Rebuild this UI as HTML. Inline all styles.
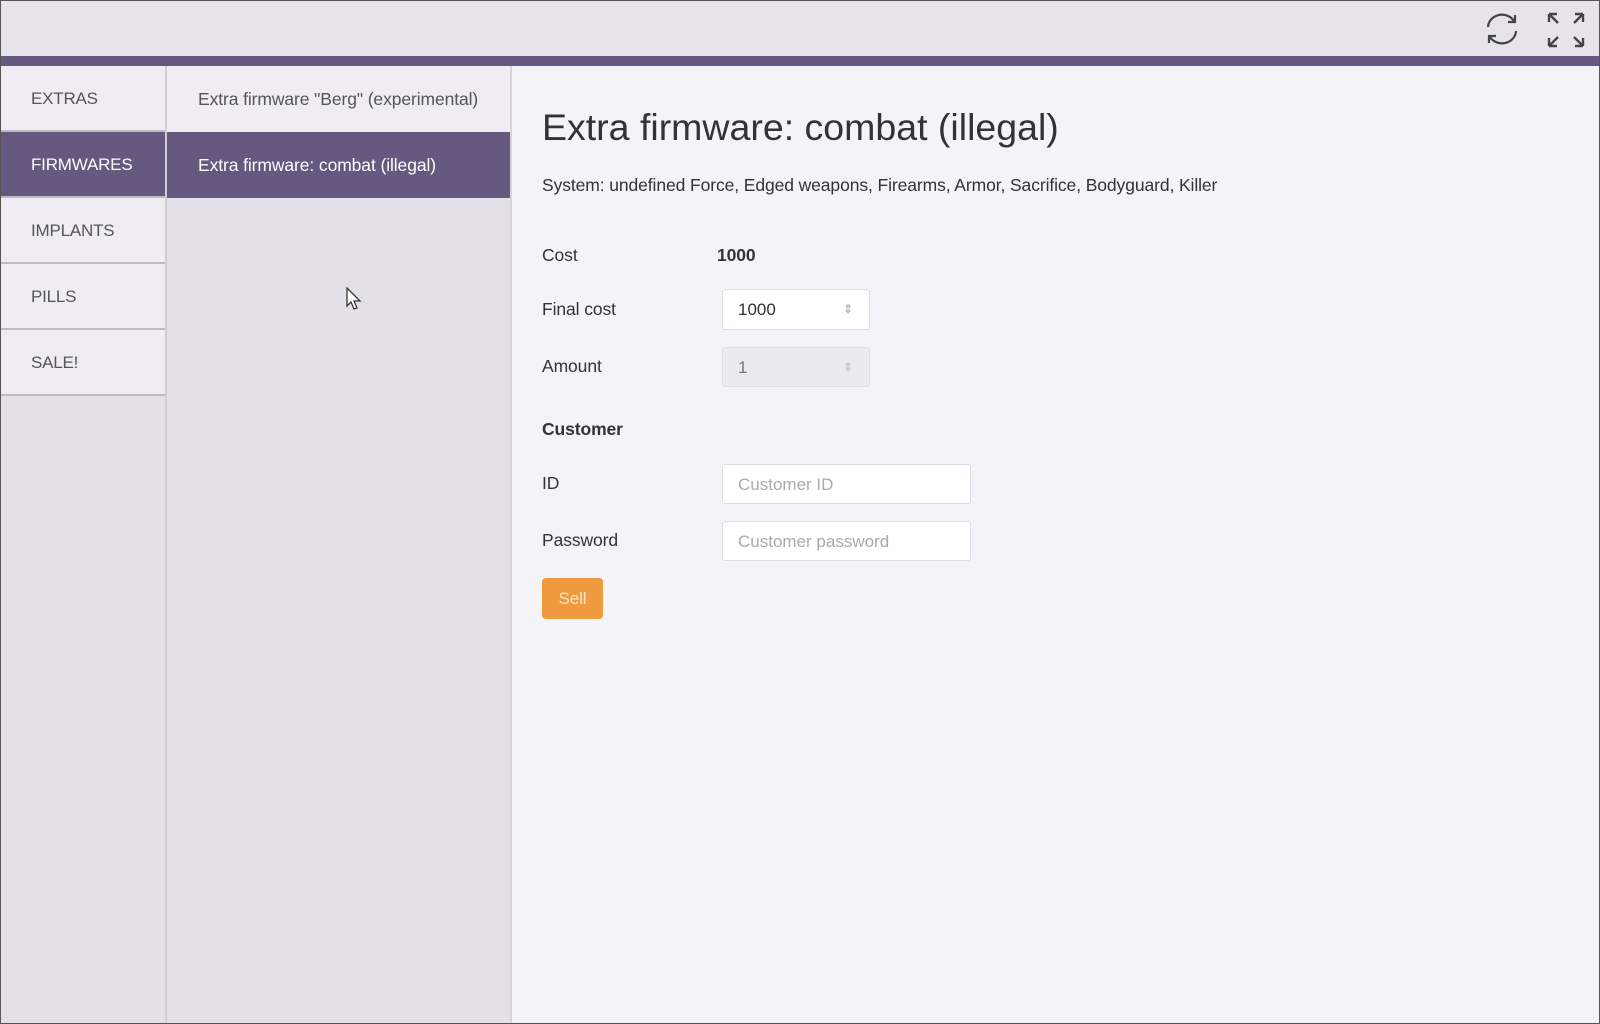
<!DOCTYPE html>
<html><head><style>
*{margin:0;padding:0;box-sizing:border-box}
body{width:1600px;height:1024px;overflow:hidden;font-family:"Liberation Sans",sans-serif;background:#f4f3f8;position:relative;color:#333}
.frame{position:absolute;inset:0;border:1px solid #555;pointer-events:none;z-index:9}
.top{position:absolute;left:0;top:0;width:1600px;height:56px;background:#e6e4ea}
.band{position:absolute;left:0;top:56px;width:1600px;height:10px;background:#66587f}
.c1{position:absolute;left:0;top:66px;width:167px;height:958px;background:#e3e1e7;border-right:2px solid #cfcdd3}
.c2{position:absolute;left:167px;top:66px;width:345px;height:958px;background:#e3e1e7;border-right:2px solid #d6d4da}
.mi{height:66px;line-height:66px;padding-left:31px;font-size:17px;letter-spacing:-0.2px;color:#555;background:#efedf3;border-bottom:2px solid #bdbbc2}
.c2 .mi{padding-left:31px;border-bottom:none;font-size:17.5px;letter-spacing:-0.1px}
.act{background:#66587f!important;color:#fff!important}
.t{position:absolute;white-space:nowrap;font-size:17.5px;letter-spacing:-0.1px}
.inp{position:absolute;background:#fff;border:1px solid #dedde2;border-radius:3px;font-size:17px;padding-left:15px;line-height:39px}
</style></head><body>
<div class="top"></div>
<svg style="position:absolute;left:1482px;top:10px" width="40" height="38" viewBox="0 0 40 38" fill="none" stroke="#444" stroke-width="2.2"><path d="M6 17a14 13 0 0 1 26-6"/><path d="M34 21a14 13 0 0 1-26 6"/><path d="M33 5v7h-7"/><path d="M7 33v-7h7"/></svg>
<svg style="position:absolute;left:1546px;top:11px" width="40" height="38" viewBox="0 0 40 38" fill="none" stroke="#444" stroke-width="2.4"><path d="M3 3l9 9M3 3v8M3 3h8"/><path d="M37 3l-9 9M37 3v8M37 3h-8"/><path d="M3 35l9-9M3 35v-8M3 35h8"/><path d="M37 35l-9-9M37 35v-8M37 35h-8"/></svg>
<div class="band"></div>
<div class="c1">
<div class="mi">EXTRAS</div><div class="mi act">FIRMWARES</div><div class="mi">IMPLANTS</div><div class="mi">PILLS</div><div class="mi">SALE!</div>
</div>
<div class="c2">
<div class="mi">Extra firmware "Berg" (experimental)</div>
<div class="mi act">Extra firmware: combat (illegal)</div>
</div>
<svg style="position:absolute;left:346px;top:287px" width="16" height="24" viewBox="0 0 16 24"><path d="M1 1v18l4-4 3 7 3-1-3-7h6z" fill="#fff" stroke="#333" stroke-width="1.3"/></svg>
<div class="t" style="left:542px;top:106px;font-size:37.5px;letter-spacing:0">Extra firmware: combat (illegal)</div>
<div class="t" style="left:542px;top:175px">System: undefined Force, Edged weapons, Firearms, Armor, Sacrifice, Bodyguard, Killer</div>
<div class="t" style="left:542px;top:245px">Cost</div>
<div class="t" style="left:717px;top:245px;font-weight:bold">1000</div>
<div class="t" style="left:542px;top:299px">Final cost</div>
<div class="inp" style="left:722px;top:289px;width:148px;height:41px">1000<span style="position:absolute;right:16px;top:0;color:#99a;font-size:12px">⇕</span></div>
<div class="t" style="left:542px;top:356px">Amount</div>
<div class="inp" style="left:722px;top:347px;width:148px;height:40px;background:#ebeaee;color:#777">1<span style="position:absolute;right:16px;top:0;color:#bbb;font-size:12px">⇕</span></div>
<div class="t" style="left:542px;top:419px;font-weight:bold">Customer</div>
<div class="t" style="left:542px;top:473px">ID</div>
<div class="inp" style="left:722px;top:464px;width:249px;height:40px;color:#aaa">Customer ID</div>
<div class="t" style="left:542px;top:530px">Password</div>
<div class="inp" style="left:722px;top:521px;width:249px;height:40px;color:#aaa">Customer password</div>
<div class="t" style="left:542px;top:578px;width:61px;height:41px;background:#ef9a3f;border-radius:4px;color:#fbe3c8;font-size:17px;text-align:center;line-height:41px">Sell</div>
<div class="frame"></div>
</body></html>
